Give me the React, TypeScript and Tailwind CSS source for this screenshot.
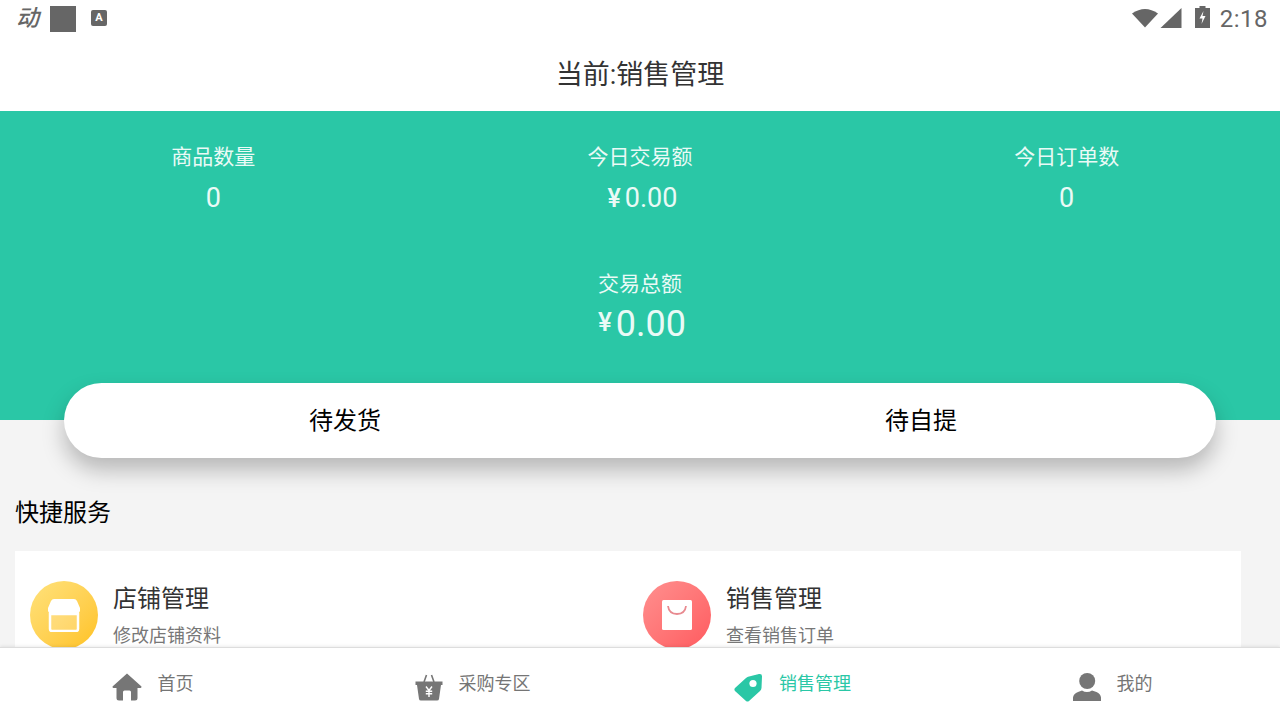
const font = { fontFamily: '"Roboto", "Noto Sans CJK SC", sans-serif' };

function HomeIcon() {
  return (
    <svg width="30" height="28" viewBox="0 0 30 28" className="shrink-0">
      <path d="M15 0.5 L29.5 13.5 Q29.6 15.2 28 15 L25.5 15 L25.5 25 Q25.5 27.5 23 27.5 L19 27.5 L19 19 Q19 17.5 17.5 17.5 L12.5 17.5 Q11 17.5 11 19 L11 27.5 L7 27.5 Q4.5 27.5 4.5 25 L4.5 15 L2 15 Q0.4 15.2 0.5 13.5 Z" fill="#767676" />
    </svg>
  );
}

function BasketIcon() {
  return (
    <svg width="28" height="27" viewBox="0 0 28 27" className="shrink-0">
      <path d="M9 8 L11.5 1 M19 8 L16.5 1" stroke="#767676" strokeWidth="1.6" fill="none" />
      <path d="M0.5 7.5 H27.5 V11 H26 L24 25 Q23.8 26.5 22 26.5 H6 Q4.2 26.5 4 25 L2 11 H0.5 Z" fill="#767676" />
      <path d="M11 12.5 L14 16.5 L17 12.5 M10.8 17.2 H17.2 M10.8 19.8 H17.2 M14 16.5 V23" stroke="#fff" strokeWidth="1.4" fill="none" />
    </svg>
  );
}

function TagIcon() {
  return (
    <svg width="29" height="29" viewBox="0 0 29 29" className="shrink-0">
      <path d="M1 15 L12 5 Q13.5 3.8 15 3.6 L25 1 Q28.2 0.5 28 3.5 L27.5 15 Q27.3 17 26 18 L15 28 Q13.5 29 12 28 L1 18 Q-0.2 16.5 1 15 Z" fill="#2ac7a6" />
      <circle cx="19" cy="10.5" r="3.6" fill="#fff" />
    </svg>
  );
}

function UserIcon() {
  return (
    <svg width="28" height="28" viewBox="0 0 28 28" className="shrink-0">
      <circle cx="14.2" cy="8" r="8" fill="#767676" />
      <path d="M0 28 V24.5 Q0.5 20.5 5 19 L9 17.5 Q14 20.5 19 17.5 L23.5 19 Q27.5 20.5 28 24.5 V28 Z" fill="#767676" />
    </svg>
  );
}

function NavItem({ icon, label, active }: { icon: React.ReactNode; label: string; active?: boolean }) {
  return (
    <div className="flex-1 flex items-center justify-center gap-[16px] pr-[15px]">
      <div className="mt-[6px]">{icon}</div>
      <span className={`text-[18px] leading-[26px] -mt-[1px] ${active ? "text-[#2ac7a6]" : "text-[#757575]"}`}>{label}</span>
    </div>
  );
}

function Stat({ label, value }: { label: string; value: string }) {
  return (
    <div className="flex-1 flex flex-col items-center">
      <span className="text-[21px] leading-[30px]">{label}</span>
      <span className={`text-[27px] leading-[30px] mt-[11px] flex items-baseline ${value.startsWith("¥") ? "ml-[5px]" : ""}`}>
        {value.startsWith("¥") && <span className="text-[25px] font-medium mr-[4px]">¥</span>}
        {value.replace("¥", "")}
      </span>
    </div>
  );
}

function Service({ bg, icon, title, sub }: { bg: string; icon: React.ReactNode; title: string; sub: string }) {
  return (
    <div className="flex-1 flex items-start gap-[15px] pl-[15px]">
      <div className={`w-[68px] h-[68px] rounded-full flex items-center justify-center shrink-0 ${bg}`}>{icon}</div>
      <div className="flex flex-col">
        <span className="text-[24px] leading-[34px] text-[#333] mt-[1px]">{title}</span>
        <span className="text-[18px] leading-[26px] text-[#777] mt-[7px]">{sub}</span>
      </div>
    </div>
  );
}

export default function App() {
  return (
    <div style={font} className="w-[1280px] h-[720px] flex flex-col overflow-hidden bg-[#f4f4f4]">
      <div className="h-[37px] bg-white flex items-center justify-between pl-[16px] pr-[12px] shrink-0">
        <div className="flex items-center gap-[11px]">
          <span className="text-[23px] leading-[30px] italic font-medium text-[#666] w-[23px]">动</span>
          <div className="w-[26px] h-[26px] bg-[#666]" />
          <div className="ml-[4px] -mt-[2px] w-[16px] h-[16px] rounded-[2px] bg-[#666] flex items-center justify-center">
            <span className="text-white text-[11px] leading-none font-bold">A</span>
          </div>
        </div>
        <div className="flex items-center">
          <svg width="26" height="20" viewBox="0 0 26 20" className="-mt-[2px]"><path d="M0 5.5 Q13 -3.5 26 5.5 L13 19.5 Z" fill="#666" /></svg>
          <svg width="22" height="20" viewBox="0 0 22 20" className="ml-[2px] -mt-[2px]"><path d="M21.5 0 V20 H0.5 Z" fill="#666" /></svg>
          <svg width="15" height="22" viewBox="0 0 15 22" className="ml-[13px] -mt-[3px]"><path d="M4.5 0 H10.5 V2 H15 V22 H0 V2 H4.5 Z" fill="#666" /><path d="M8.5 5 L4.5 12.5 H7.5 L6.5 18 L10.5 10 H7.5 Z" fill="#fff" /></svg>
          <span className="text-[24px] leading-[30px] text-[#666] ml-[10px] tracking-[0.5px]">2:18</span>
        </div>
      </div>
      <div className="h-[74px] bg-white flex items-center justify-center shrink-0 pt-[2px]">
        <span className="text-[27px] leading-[38px] text-[#333]">当前:销售管理</span>
      </div>
      <div className="flex-1 min-h-0 overflow-hidden">
        <div className="h-[309px] bg-[#2ac7a6] text-[#eafaf6] flex flex-col items-center pt-[31px]">
          <div className="flex w-full">
            <Stat label="商品数量" value="0" />
            <Stat label="今日交易额" value="¥0.00" />
            <Stat label="今日订单数" value="0" />
          </div>
          <span className="text-[21px] leading-[30px] mt-[55px]">交易总额</span>
          <span className="flex items-baseline text-[36px] leading-[44px] mt-[3px] ml-[4px]">
            <span className="text-[26px] font-medium mr-[4px] -translate-y-[5px]">¥</span>0.00
          </span>
        </div>
        <div className="relative -mt-[37px] mx-[64px] h-[75px] rounded-[38px] bg-white flex shadow-[0_12px_22px_rgba(0,0,0,0.25)]">
          <div className="flex-1 flex items-center justify-center text-[24px] text-black pr-[14px]">待发货</div>
          <div className="flex-1 flex items-center justify-center text-[24px] text-black pr-[14px]">待自提</div>
        </div>
        <div className="text-[24px] leading-[34px] text-black pl-[15px] mt-[38px]">快捷服务</div>
        <div className="ml-[15px] w-[1226px] h-[140px] bg-white mt-[21px] pt-[30px] flex">
          <Service
            bg="bg-gradient-to-br from-[#ffe27a] to-[#ffc21a]"
            title="店铺管理"
            sub="修改店铺资料"
            icon={
              <svg width="34" height="34" viewBox="0 0 34 34">
                <path d="M3 16 V31 Q3 33 5 33 H29 Q31 33 31 31 V16 Z" fill="#fff" fillOpacity="0.2" stroke="#fff" strokeWidth="2.5" />
                <path d="M7 1 H27 Q29 1 30 3 L33 10 V13 Q31 18 28 15 Q25 19 22 15 Q19 19 17 15 Q14 19 12 15 Q9 19 6 15 Q3 18 1 13 V10 L4 3 Q5 1 7 1 Z" fill="#fff" />
              </svg>
            }
          />
          <Service
            bg="bg-gradient-to-br from-[#ff8f8f] to-[#ff5a5f]"
            title="销售管理"
            sub="查看销售订单"
            icon={
              <svg width="30" height="30" viewBox="0 0 30 30">
                <rect width="30" height="30" rx="1.5" fill="#fff" />
                <path d="M6 6 Q7 14 15 14 Q23 14 24 6" fill="none" stroke="#e88a90" strokeWidth="1.8" />
              </svg>
            }
          />
        </div>
      </div>
      <div className="relative h-[73px] bg-white shrink-0 flex border-t border-[#ddd] shadow-[0_-1px_3px_rgba(0,0,0,0.08)]">
        <NavItem icon={<HomeIcon />} label="首页" />
        <NavItem icon={<BasketIcon />} label="采购专区" />
        <NavItem icon={<TagIcon />} label="销售管理" active />
        <NavItem icon={<UserIcon />} label="我的" />
      </div>
    </div>
  );
}
